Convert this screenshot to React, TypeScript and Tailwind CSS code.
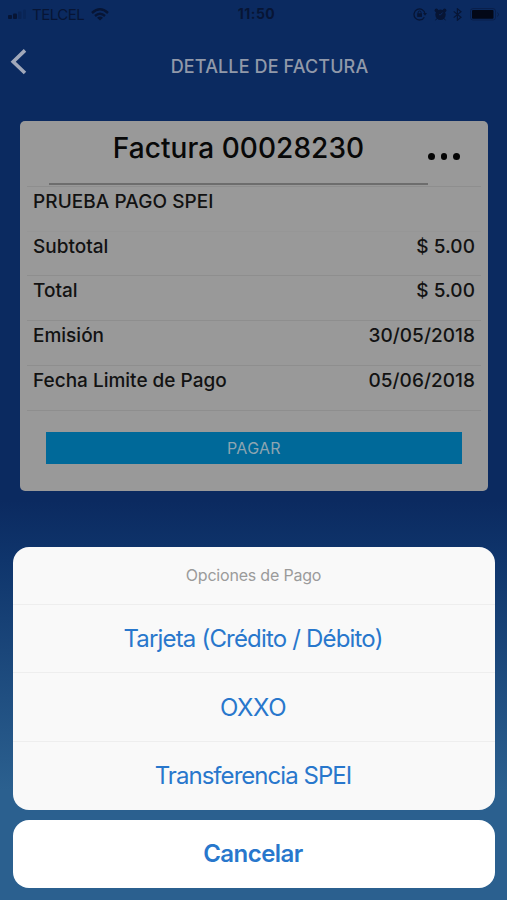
import React from "react";

const details = [
  { label: "Subtotal", value: "$ 5.00" },
  { label: "Total", value: "$ 5.00" },
  { label: "Emisión", value: "30/05/2018" },
  { label: "Fecha Limite de Pago", value: "05/06/2018" },
];

function StatusBar() {
  return (
    <div className="grid h-7 grid-cols-3 items-center pl-2 pr-[7px] text-[#071535]">
      <div className="flex items-center">
        <svg width="19" height="11" viewBox="0 0 19 11" fill="currentColor">
          <rect x="0" y="6" width="4" height="4" rx="1" />
          <rect x="5" y="4.5" width="4" height="5.5" rx="1" />
          <rect x="10" y="2.5" width="3.5" height="7.5" rx="1" opacity=".3" />
          <rect x="15" y="0.5" width="3" height="9.5" rx="1" opacity=".2" />
        </svg>
        <span className="ml-[5px] text-[15px] leading-none tracking-[-0.5px]">TELCEL</span>
        <svg className="ml-[7px]" width="18" height="13" viewBox="0 0 18 13" fill="none" stroke="currentColor" strokeWidth="2.4">
          <path d="M1 5 Q9 -2.3 17 5" />
          <path d="M4 8 Q9 3.6 14 8" />
          <path d="M9 12.5 L6 9.7 Q9 7.3 12 9.7 Z" fill="currentColor" stroke="none" />
        </svg>
      </div>
      <div className="pl-[5px] text-center text-[14px] font-bold leading-none tracking-[0.5px]">11:50</div>
      <div className="flex items-center justify-end">
        <svg width="14" height="14" viewBox="0 0 14 14" fill="none" stroke="currentColor" strokeWidth="1.3">
          <path d="M11.3 10.2 A5.5 5.5 0 1 1 12 7" />
          <path d="M10 6 L14 6 L12 8.8 Z" fill="currentColor" stroke="none" />
          <rect x="4.2" y="6.3" width="4.8" height="3.6" fill="currentColor" stroke="none" />
          <path d="M5.2 6.5 V5.4 a1.4 1.4 0 0 1 2.8 0 V6.5" strokeWidth="1" />
        </svg>
        <svg className="ml-[7px]" width="13" height="13" viewBox="0 0 13 13" fill="currentColor">
          <circle cx="6.5" cy="6.8" r="5.2" />
          <circle cx="2.4" cy="2.4" r="1.8" />
          <circle cx="10.6" cy="2.4" r="1.8" />
          <path d="M2.8 10.5 L1.6 12.3 M10.2 10.5 L11.4 12.3" stroke="currentColor" />
          <path d="M8.7 4.5 L6.3 7 L5 6.5" stroke="#0b2a60" strokeWidth="1" fill="none" />
        </svg>
        <svg className="ml-[6px]" width="9" height="13" viewBox="0 0 9 13" fill="none" stroke="currentColor" strokeWidth="1.2">
          <path d="M0.7 3.4 L8 9.3 L4.4 12.2 V0.8 L8 3.7 L0.7 9.6" />
        </svg>
        <svg className="ml-[8px]" width="30" height="13" viewBox="0 0 30 13" fill="none">
          <rect x="0.5" y="0.6" width="25" height="11.4" rx="2.5" stroke="currentColor" opacity=".5" />
          <rect x="2" y="2" width="21.5" height="8.8" rx="1" fill="#030817" />
          <path d="M27.5 4.5 q2 2 0 4" stroke="currentColor" opacity=".6" />
        </svg>
      </div>
    </div>
  );
}

function Header() {
  return (
    <div className="grid h-[76px] grid-cols-[60px_1fr_60px] items-start">
      <svg className="ml-[10px] mt-[20px]" width="18" height="28" viewBox="0 0 18 28" fill="none" stroke="#a1a8ba" strokeWidth="3.6">
        <path d="M15 2.4 L3.2 13.7 L15 25" />
      </svg>
      <h1 className="whitespace-nowrap pl-8 pt-[27px] text-center text-[18px] font-medium leading-6 tracking-[0.13px] text-[#9199a9]">
        DETALLE DE FACTURA
      </h1>
    </div>
  );
}

function InvoiceCard() {
  return (
    <div className="mx-[20px] mt-[17px] h-[370px] w-[468px] rounded-[5px] bg-[#999999] px-[7px] text-[#121212]">
      <div className="flex h-[66px] border-b border-[#8e8e8e]">
        <div className="ml-[22px] h-[64px] w-[379px] border-b-2 border-[#6d6d6d] pt-[8px] text-center text-[28px] font-medium leading-[38px] tracking-[0.06px] text-[#080808]">
          <span className="whitespace-nowrap">Factura 00028230</span>
        </div>
        <div className="flex gap-[6px] pt-[32px]">
          <i className="h-[6.5px] w-[6.5px] rounded-full bg-[#050505]" />
          <i className="h-[6.5px] w-[6.5px] rounded-full bg-[#050505]" />
          <i className="h-[6.5px] w-[6.5px] rounded-full bg-[#050505]" />
        </div>
      </div>
      <div className="h-[44.7px] border-b border-[#969696] px-[6px] pt-[3px] text-[19px] font-medium leading-6 tracking-[0.07px]">
        PRUEBA PAGO SPEI
      </div>
      {details.map((d) => (
        <div key={d.label} className="flex h-[44.8px] justify-between border-b border-[#8e8e8e] px-[6px] pt-[3px] text-[19px] font-medium leading-6">
          <span>{d.label}</span>
          <span className="tracking-[0.05px]">{d.value}</span>
        </div>
      ))}
      <button className="ml-[19px] mt-[21px] block h-[32px] w-[416px] bg-[#006999] text-[16px] leading-[32px] tracking-[0.3px] text-[#8da5b1]">
        PAGAR
      </button>
    </div>
  );
}

function ActionSheet() {
  return (
    <div className="mx-[13px] mt-[55.5px] w-[482px] text-center text-[#2877cc]">
      <div className="h-[263px] overflow-hidden rounded-[16px] bg-[#f9f9f9]">
        <div className="h-[58px] border-b border-[#eeeeee] pr-px pt-[16px] text-[16px] leading-6 tracking-[-0.2px] text-[#9b9b9b]">Opciones de Pago</div>
        <button className="block h-[68.5px] w-full border-b border-[#eeeeee] pr-[2px] pt-[2px] text-[24px] tracking-[-0.82px]">Tarjeta (Crédito / Débito)</button>
        <button className="block h-[68.5px] w-full border-b border-[#eeeeee] pr-[2px] pt-[2px] text-[24px] tracking-[-0.4px]">OXXO</button>
        <button className="block h-[68px] w-full pr-[2px] pt-px text-[24px] tracking-[-0.95px]">Transferencia SPEI</button>
      </div>
      <button className="mt-[10px] block h-[68px] w-full rounded-[16px] bg-white pr-[2px] pt-px text-[24px] font-semibold tracking-[-0.55px]">Cancelar</button>
    </div>
  );
}

export default function App() {
  return (
    <main className="h-[900px] w-[507px] overflow-hidden bg-[linear-gradient(180deg,#0b2a60_0px,#0b2a60_500px,#0f356c_560px,#2b608f_790px,#2b608f_900px)] font-['Inter','Liberation_Sans',sans-serif]">
      <StatusBar />
      <Header />
      <InvoiceCard />
      <ActionSheet />
    </main>
  );
}
